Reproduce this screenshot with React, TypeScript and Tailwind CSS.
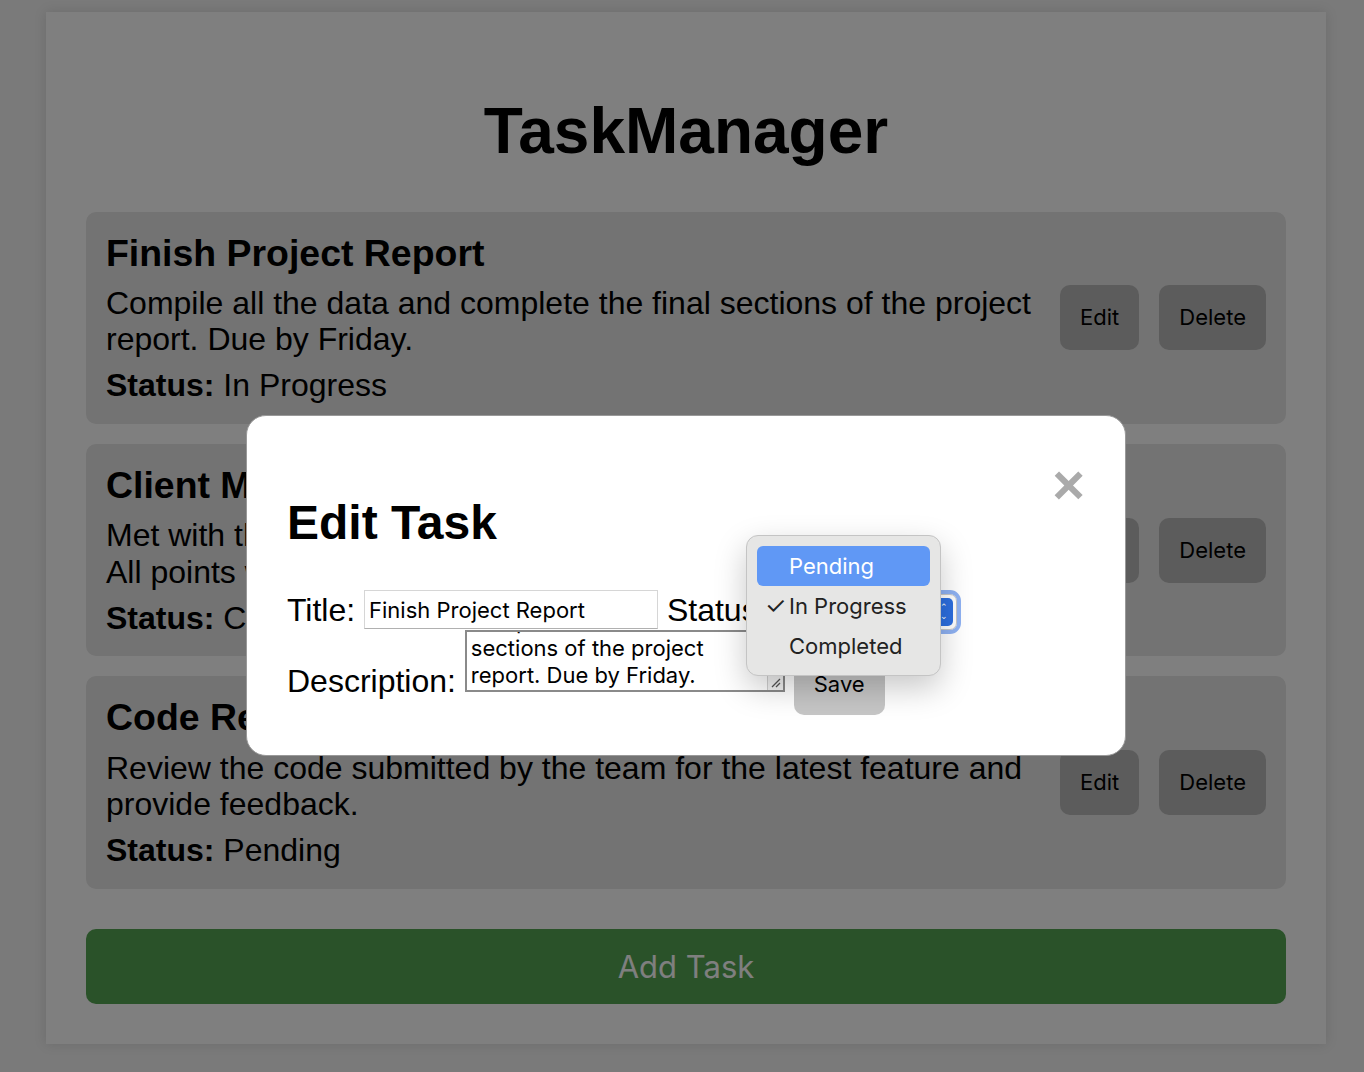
import React, { useEffect, useRef } from 'react';

type Task = { title: string; description: React.ReactNode; status: string };

const tasks: Task[] = [
  {
    title: 'Finish Project Report',
    description: 'Compile all the data and complete the final sections of the project report. Due by Friday.',
    status: 'In Progress',
  },
  {
    title: 'Client Meeting',
    description: (
      <>
        Met with the client to discuss the project timeline.
        <br />
        All points were noted and shared with the team.
      </>
    ),
    status: 'Completed',
  },
  {
    title: 'Code Review',
    description: 'Review the code submitted by the team for the latest feature and provide feedback.',
    status: 'Pending',
  },
];

const TaskCard = ({ task }: { task: Task }) => (
  <div className="flex items-center bg-[#e6e6e6] rounded-[10px] p-[20px] mb-[20px]">
    <div className="flex-1">
      <h3 className="text-[37.44px] font-bold leading-[1.15] mb-[10px]">{task.title}</h3>
      <p className="mb-[9px]">{task.description}</p>
      <p>
        <strong>Status:</strong> {task.status}
      </p>
    </div>
    <div className="flex gap-[20px] ml-[20px] font-['Inter',sans-serif] text-[22px] leading-[25px]">
      <button className="px-[20px] py-[20px] bg-[#b8b8b8] rounded-[10px]">Edit</button>
      <button className="px-[20px] py-[20px] bg-[#b8b8b8] rounded-[10px]">Delete</button>
    </div>
  </div>
);

const EditModal = () => {
  const areaRef = useRef<HTMLTextAreaElement>(null);
  useEffect(() => {
    if (areaRef.current) areaRef.current.scrollTop = areaRef.current.scrollHeight;
  }, []);

  return (
    <div className="absolute left-[246px] top-[415px] w-[880px] bg-white border border-[#999] rounded-[20px] p-[40px] pt-[39px]">
      <span className="float-right text-[56px] font-bold text-[#aaa] leading-[1.15] -mt-[2px]">×</span>
      <h2 className="text-[48px] font-bold leading-[1.15] mt-[40px] mb-[40px]">Edit Task</h2>
      <div className="relative">
        <label>Title:</label>{' '}
        <input
          defaultValue="Finish Project Report"
          className="align-[3px] w-[294px] h-[39px] px-[4px] border border-[#d6d6d6] border-b-[#b0b0b0] font-['Inter',sans-serif] text-[22px] outline-none"
        />{' '}
        <label>Status:</label>{' '}
        <span className="inline-block align-[-9px] w-[182px] h-[36px] rounded-[7px] border border-[#c8c8c8] bg-white outline outline-[4px] outline-[#8fb2f3] relative">
          <span className="absolute right-[3px] top-[3px] w-[18px] h-[28px] bg-[#2d6fe0] rounded-[5px] flex flex-col items-center justify-center text-white text-[9px] leading-[9px]">
            <span>⌃</span>
            <span>⌄</span>
          </span>
        </span>{' '}
        <label>Description:</label>{' '}
        <span className="relative inline-block">
          <textarea
            ref={areaRef}
            readOnly
            defaultValue="Compile all the data and complete the final sections of the project report. Due by Friday."
            className="block w-[320px] h-[62px] pl-[4px] pr-[46px] py-[1px] border-2 border-[#8a8a8a] font-['Inter',sans-serif] text-[22px] leading-[27px] overflow-hidden outline-none resize-none"
          />
          <span className="absolute right-[2px] bottom-[2px] w-[16px] h-[16px] bg-[#f2f2f2] border-l border-t border-[#d0d0d0] flex items-center justify-center">
            <svg width="12" height="12" viewBox="0 0 12 12">
              <path d="M11 3 L3 11 M11 7 L7 11" stroke="#555" strokeWidth="1.3" />
            </svg>
          </span>
        </span>{' '}
        <button className="px-[20px] py-[18px] bg-[#c6c6c6] rounded-[10px] font-['Inter',sans-serif] text-[22px] leading-[25px]">
          Save
        </button>
        <div className="absolute left-[459px] top-[-55px] w-[195px] h-[141px] bg-[#e6e6e5] border border-[#c4c4c4] rounded-[12px] shadow-[0_12px_32px_rgba(0,0,0,0.22)] p-[10px] font-['Inter',sans-serif] text-[22px] text-[#222] leading-[40px]">
          <div className="bg-[#6098f5] text-white rounded-[6px] pl-[32px]">Pending</div>
          <div className="relative pl-[32px]">
            <span className="absolute left-[8px] top-0 text-[24px]">✓</span>In Progress
          </div>
          <div className="pl-[32px]">Completed</div>
        </div>
      </div>
    </div>
  );
};

export default function App() {
  return (
    <div className="relative min-h-screen bg-[#f4f4f4] pt-[12px] pb-[12px] font-['Liberation_Sans',Arial,sans-serif] text-[32px] leading-[1.15] text-black">
      <div className="ml-[46px] w-[1280px] bg-white p-[40px] shadow-[0_0_12px_rgba(0,0,0,0.12)]">
        <h1 className="text-center text-[64px] font-bold leading-[1.15] my-[43px]">TaskManager</h1>
        {tasks.map((t) => (
          <TaskCard key={t.title} task={t} />
        ))}
        <button className="mt-[20px] w-full h-[75px] bg-[#54a452] text-white rounded-[10px] font-['Inter',sans-serif] text-[31px]">
          Add Task
        </button>
      </div>
      <div className="fixed inset-0 bg-black/50" />
      <EditModal />
    </div>
  );
}
